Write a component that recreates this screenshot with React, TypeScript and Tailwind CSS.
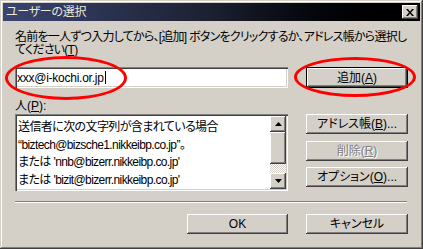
import React from "react"

const raised =
  "bg-[#d4d0c8] shadow-[inset_-1px_-1px_#404040,inset_1px_1px_#ffffff,inset_-2px_-2px_#808080,inset_2px_2px_#d4d0c8]"
const sunken =
  "bg-white shadow-[inset_1px_1px_#808080,inset_2px_2px_#404040,inset_-1px_-1px_#ffffff,inset_-2px_-2px_#d4d0c8]"

function Btn({ children, className = "", isDefault = false }: { children: React.ReactNode; className?: string; isDefault?: boolean }) {
  return (
    <div
      className={
        "flex items-center justify-center text-[12px] leading-[12px] " +
        (isDefault
          ? "bg-[#d4d0c8] border border-black shadow-[inset_-1px_-1px_#404040,inset_1px_1px_#ffffff,inset_-2px_-2px_#808080]"
          : raised) +
        " " +
        className
      }
    >
      {children}
    </div>
  )
}

function Arrow({ up }: { up?: boolean }) {
  return (
    <svg width="7" height="4" viewBox="0 0 7 4">
      <path d={up ? "M3.5 0 L7 4 L0 4 Z" : "M0 0 L7 0 L3.5 4 Z"} fill="#000" />
    </svg>
  )
}

export default function App() {
  const people = [
    "送信者に次の文字列が含まれている場合",
    "“biztech@bizsche1.nikkeibp.co.jp”。",
    "または 'nnb@bizerr.nikkeibp.co.jp'",
    "または 'bizit@bizerr.nikkeibp.co.jp'",
  ]

  return (
    <div className="relative w-[423px] h-[249px] overflow-hidden bg-[#d4d0c8] font-['Liberation_Sans','Noto_Sans_CJK_JP',sans-serif] [font-feature-settings:'palt'] text-black shadow-[inset_-1px_-1px_#404040,inset_1px_1px_#d4d0c8,inset_-2px_-2px_#808080,inset_2px_2px_#ffffff]">
      <div className="px-[3px] pt-[3px]">
        <div className="h-[18px] flex items-center justify-between pl-[3px] pr-[2px] bg-gradient-to-r from-[#3a4572] via-[#1c2030] to-[#000000]">
          <span className="text-[12px] leading-[12px] text-[#ecead6] tracking-[-0.3px]">ユーザーの選択</span>
          <div className={raised + " w-[16px] h-[14px] flex items-center justify-center"}>
            <svg width="8" height="7" viewBox="0 0 8 7">
              <path d="M0 0 L2 0 L4 2.5 L6 0 L8 0 L5 3.5 L8 7 L6 7 L4 4.5 L2 7 L0 7 L3 3.5 Z" fill="#000" />
            </svg>
          </div>
        </div>
      </div>

      <div className="px-[15px] pt-[10px]">
        <p className="text-[12px] leading-[13px] tracking-[-0.75px] whitespace-nowrap">
          名前を一人ずつ入力してから、[追加] ボタンをクリックするか、アドレス帳から選択し
          <br />
          てください(<u>T</u>)
        </p>

        <div className="flex gap-[18px] mt-[10px]">
          <div className={sunken + " w-[273px] h-[21px] flex items-center pl-[2px]"}>
            <span className="text-[12px] leading-[12px] tracking-[-0.25px]">xxx@i-kochi.or.jp</span>
            <span className="w-px h-[13px] bg-black ml-px" />
          </div>
          <Btn isDefault className="w-[102px] h-[21px]">
            追加(<u>A</u>)
          </Btn>
        </div>

        <div className="mt-[12px] text-[12px] leading-[12px]">
          人(<u>P</u>):
        </div>

        <div className="flex gap-[18px] mt-[2px]">
          <div className={sunken + " w-[273px] h-[77px] flex p-[2px]"}>
            <div className="flex-1 overflow-hidden pt-[3px] pl-px">
              {people.map((p) => (
                <div key={p} className="text-[12px] leading-[17.5px] tracking-[-0.6px] whitespace-nowrap">
                  {p}
                </div>
              ))}
            </div>
            <div className="w-[16px] flex flex-col">
              <div className={raised + " h-[16px] flex items-center justify-center"}>
                <Arrow up />
              </div>
              <div className={raised + " h-[32px]"} />
              <div className="flex-1 bg-[repeating-conic-gradient(#ffffff_0_25%,#d4d0c8_0_50%)] bg-[length:2px_2px]" />
              <div className={raised + " h-[16px] flex items-center justify-center"}>
                <Arrow />
              </div>
            </div>
          </div>
          <div className="flex flex-col w-[102px]">
            <Btn className="h-[20px]">
              アドレス帳(<u>B</u>)...
            </Btn>
            <Btn className="h-[20px] mt-[7px] text-[#808080] [text-shadow:1px_1px_#ffffff]">
              削除(<u>R</u>)
            </Btn>
            <Btn className="h-[20px] mt-[6px]">
              オプション(<u>O</u>)...
            </Btn>
          </div>
        </div>

        <div className="mt-[10px] w-[392px] border-t border-t-[#808080] border-b border-b-white" />

        <div className="flex justify-end gap-[18px] mt-[11px] w-[393px]">
          <Btn className="w-[101px] h-[20px]">OK</Btn>
          <Btn className="w-[102px] h-[20px]">キャンセル</Btn>
        </div>
      </div>

      <div className="absolute left-[5px] top-[56px] w-[122px] h-[44px] rounded-[50%] border-[3px] border-[#ff0000]" />
      <div className="absolute left-[294px] top-[57px] w-[122px] h-[40px] rounded-[50%] border-[3px] border-[#ff0000]" />
    </div>
  )
}
